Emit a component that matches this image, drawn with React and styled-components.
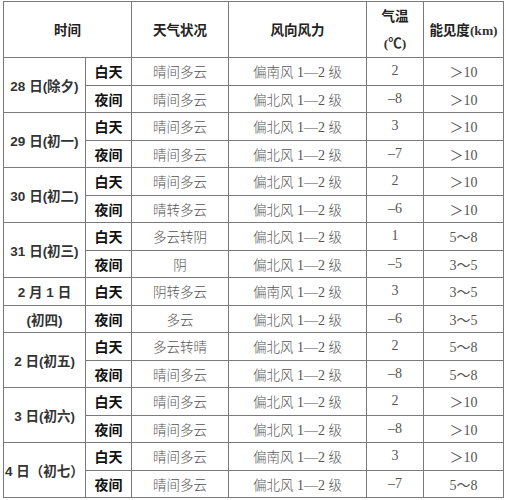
import React from "react";
import styled, { createGlobalStyle } from "styled-components";

const Global = createGlobalStyle`
  html, body { margin: 0; padding: 0; background: #fff; }
  body { width: 506px; height: 500px; overflow: hidden; }
`;

const Page = styled.div`
  padding: 1px 0 0 3px;
`;

const Table = styled.table`
  border-collapse: collapse;
  table-layout: fixed;
  width: 500px;
  border: 1px solid #7a7a7a;
`;

const Head = styled.th`
  height: 54px;
  padding: 0;
  border: 1px solid #7a7a7a;
  font-family: "Noto Sans CJK SC", "Liberation Sans", sans-serif;
  font-weight: 700;
  font-size: 13.5px;
  color: #222;
  text-align: center;
  vertical-align: middle;
  line-height: 27px;
`;

const Unit = styled.span`
  font-family: "Liberation Serif", "Noto Sans CJK SC", serif;
  font-weight: 700;
  font-size: 13.5px;
  color: #333;
`;

const DateCell = styled.td`
  padding: 0;
  border: 1px solid #7a7a7a;
  font-family: "Liberation Sans", "Noto Sans CJK SC", sans-serif;
  font-weight: 600;
  font-size: 13.5px;
  color: #333;
  text-align: center;
  vertical-align: middle;
  white-space: nowrap;
`;

const Period = styled.td`
  height: 26.5px;
  padding: 0;
  border: 1px solid #7a7a7a;
  font-family: "Noto Sans CJK SC", sans-serif;
  font-weight: 700;
  font-size: 14px;
  color: #111;
  text-align: center;
  vertical-align: middle;
`;

const Val = styled.td`
  padding: 0;
  border: 1px solid #7a7a7a;
  font-family: "Liberation Serif", "Noto Sans CJK SC", serif;
  font-weight: 400;
  font-size: 14px;
  color: #555;
  text-align: center;
  vertical-align: middle;
  white-space: nowrap;
`;

const Cn = styled.span`
  font-family: "Noto Sans CJK SC", sans-serif;
  font-weight: 300;
  font-size: 13.5px;
`;

const rows = [
  { date: "28 日(除夕)", d: ["晴间多云", "偏南风", "2", "＞10"], n: ["晴间多云", "偏北风", "–8", "＞10"] },
  { date: "29 日(初一)", d: ["晴间多云", "偏北风", "3", "＞10"], n: ["晴间多云", "偏北风", "–7", "＞10"] },
  { date: "30 日(初二)", d: ["晴间多云", "偏北风", "2", "＞10"], n: ["晴转多云", "偏北风", "–6", "＞10"] },
  { date: "31 日(初三)", d: ["多云转阴", "偏北风", "1", "5～8"], n: ["阴", "偏北风", "–5", "3～5"] },
  { date: ["2 月 1 日", "(初四)"], d: ["阴转多云", "偏南风", "3", "3～5"], n: ["多云", "偏北风", "–6", "3～5"] },
  { date: "2 日(初五)", d: ["多云转晴", "偏北风", "2", "5～8"], n: ["晴间多云", "偏北风", "–8", "5～8"] },
  { date: "3 日(初六)", d: ["晴间多云", "偏北风", "2", "＞10"], n: ["晴间多云", "偏北风", "–8", "＞10"] },
  { date: "4 日（初七）", d: ["晴间多云", "偏南风", "3", "＞10"], n: ["晴间多云", "偏北风", "–7", "5～8"] },
];

const Cells = ({ v }) => (
  <>
    <Val><Cn>{v[0]}</Cn></Val>
    <Val><Cn>{v[1]}</Cn> 1—2 <Cn>级</Cn></Val>
    <Val>{v[2]}</Val>
    <Val>{v[3]}</Val>
  </>
);

export default function App() {
  return (
    <Page>
      <Global />
      <Table>
        <colgroup>
          <col style={{ width: 82 }} />
          <col style={{ width: 46 }} />
          <col style={{ width: 97 }} />
          <col style={{ width: 138 }} />
          <col style={{ width: 57 }} />
          <col style={{ width: 80 }} />
        </colgroup>
        <thead>
          <tr>
            <Head colSpan={2}>时间</Head>
            <Head>天气状况</Head>
            <Head>风向风力</Head>
            <Head>气温<br /><Unit>(℃)</Unit></Head>
            <Head>能见度<Unit>(km)</Unit></Head>
          </tr>
        </thead>
        <tbody>
          {rows.map((r, i) => (
            <React.Fragment key={i}>
              <tr>
                {Array.isArray(r.date) ? (
                  <DateCell>{r.date[0]}</DateCell>
                ) : (
                  <DateCell rowSpan={2}>{r.date}</DateCell>
                )}
                <Period>白天</Period>
                <Cells v={r.d} />
              </tr>
              <tr>
                {Array.isArray(r.date) && <DateCell>{r.date[1]}</DateCell>}
                <Period>夜间</Period>
                <Cells v={r.n} />
              </tr>
            </React.Fragment>
          ))}
        </tbody>
      </Table>
    </Page>
  );
}
